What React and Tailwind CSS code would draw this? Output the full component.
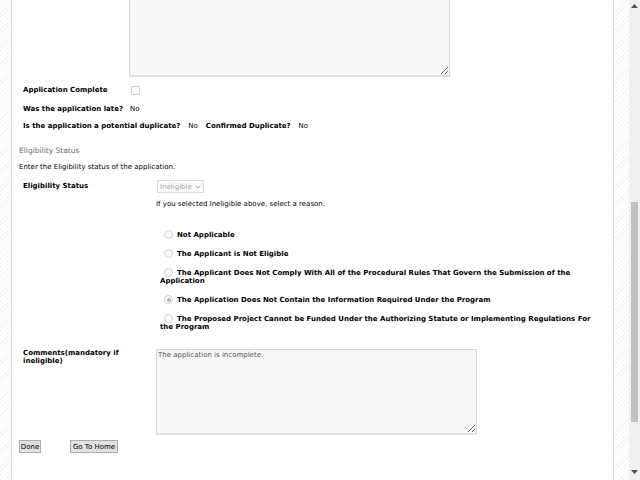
import React from 'react'

const stripe = "bg-[repeating-linear-gradient(135deg,#f1f3f6_0px,#f1f3f6_1px,#ffffff_1px,#ffffff_3px)]"

const reasons = [
  { label: "Not Applicable", mt: "mt-[23px]" },
  { label: "The Applicant is Not Eligible", mt: "mt-[11px]" },
  { label: "The Applicant Does Not Comply With All of the Procedural Rules That Govern the Submission of the Application", mt: "mt-[11px]" },
  { label: "The Application Does Not Contain the Information Required Under the Program", mt: "mt-[11px]", checked: true },
  { label: "The Proposed Project Cannot be Funded Under the Authorizing Statute or Implementing Regulations For the Program", mt: "mt-[11px]" },
]

function Radio({ checked }) {
  return (
    <span className="relative -mt-[1px] mr-[4px] ml-[4px] inline-block h-[9px] w-[9px] rounded-full border border-[#cfcfcf] bg-[#fbfbfb] align-top">
      {checked && <span className="absolute left-[1.5px] top-[1.5px] h-[4px] w-[4px] rounded-full bg-[#b5b5b5]" />}
    </span>
  )
}

function Scrollbar() {
  return (
    <div className="flex w-[11px] shrink-0 flex-col items-center bg-[#f0f0f0]">
      <svg width="7" height="4" className="mt-[4px]" viewBox="0 0 7 4"><path d="M3.5 0 L7 4 L0 4 Z" fill="#505050" /></svg>
      <div className="mt-[194px] h-[220px] w-[7px] bg-[#c1c1c1]" />
      <svg width="7" height="4" className="mt-[48px]" viewBox="0 0 7 4"><path d="M0 0 L7 0 L3.5 4 Z" fill="#505050" /></svg>
    </div>
  )
}

export default function App() {
  return (
    <div className="flex h-[480px] w-[640px] overflow-hidden bg-white font-['DejaVu_Sans',Verdana,sans-serif] text-[7px] leading-[8px] text-black">
      <div className={`w-[11px] shrink-0 ${stripe}`} />
      <main className="flex w-[603px] shrink-0 flex-col border-x border-[#d3dce8] bg-white">
        {/* previous textarea, cut off at top */}
        <textarea
          readOnly
          className="-mt-[10px] ml-[117px] h-[87px] w-[321px] border border-b-2 border-[#d6d6d6] border-b-[#e2e2e2] bg-[#f7f7f7] outline-none"
        />

        <div className="mt-[4px] flex h-[18px] items-center pl-[11px]">
          <span className="w-[108px] font-bold">Application Complete</span>
          <span className="h-[9px] w-[9px] rounded-[2px] border border-[#cbcbcb] bg-[#fbfbfb]" />
        </div>
        <div className="mt-[1px] flex h-[17px] items-center gap-[7px] pl-[11px]">
          <span className="font-bold">Was the application late?</span>
          <span>No</span>
        </div>
        <div className="flex h-[18px] items-center gap-[8px] pl-[11px]">
          <span className="font-bold">Is the application a potential duplicate?</span>
          <span>No</span>
          <span className="font-bold">Confirmed Duplicate?</span>
          <span>No</span>
        </div>

        <div className="mt-[8px] flex h-[16px] items-center pl-[7px] text-[7.5px] text-[#6e6e6e]">Eligibility Status</div>
        <div className="flex h-[16px] items-center pl-[7px]">Enter the Eligibility status of the application.</div>

        <div className="mt-[5px] flex items-start pl-[11px]">
          <span className="mt-[2px] w-[134px] font-bold">Eligibility Status</span>
          <div className="flex h-[13px] w-[47px] items-center gap-[3px] border border-[#dadada] bg-[#fafafa] pl-[2px] text-[#a8a8a8]">
            <span>Ineligible</span>
            <svg width="6" height="4" viewBox="0 0 6 4"><path d="M0.5 0.5 L3 3 L5.5 0.5" stroke="#a8a8a8" fill="none" strokeWidth="1" /></svg>
          </div>
        </div>
        <div className="mt-[7px] pl-[144px]">If you selected Ineligible above, select a reason:</div>

        {reasons.map((r) => (
          <div key={r.label} className={`${r.mt} w-[590px] pl-[148px] font-bold`}>
            <Radio checked={r.checked} />
            {r.label}
          </div>
        ))}

        <div className="mt-[18px] flex items-start pl-[11px]">
          <span className="w-[122px] font-bold">Comments(mandatory if ineligible)</span>
          <textarea
            readOnly
            defaultValue="The application is incomplete."
            className="ml-[11px] h-[86px] w-[321px] border border-b-2 border-[#d6d6d6] border-b-[#e2e2e2] bg-[#f7f7f7] p-[1px] font-['DejaVu_Sans',Verdana,sans-serif] text-[7px] leading-[8px] text-[#555] outline-none"
          />
        </div>

        <div className="mt-[5px] flex gap-[29px] pl-[7px]">
          <button className="h-[13px] w-[22px] border border-[#adadad] bg-[#e1e1e1] text-[7px]">Done</button>
          <button className="h-[13px] w-[48px] border border-[#adadad] bg-[#e1e1e1] text-[7px]">Go To Home</button>
        </div>
      </main>
      <div className={`w-[15px] shrink-0 ${stripe}`} />
      <Scrollbar />
    </div>
  )
}
